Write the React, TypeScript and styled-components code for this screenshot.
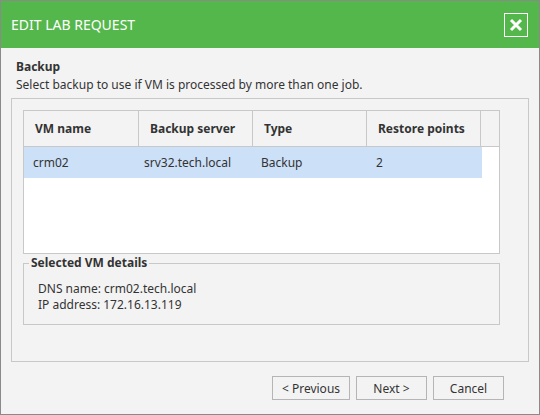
import styled, { createGlobalStyle } from 'styled-components';

const Global = createGlobalStyle`
  html, body { margin: 0; padding: 0; }
  body { font-family: "Noto Sans", "Open Sans", sans-serif; font-size: 12px; color: #333; }
`;

const Dialog = styled.div`
  width: 540px;
  height: 415px;
  box-sizing: border-box;
  border: 1px solid #8a8a8a;
  background: #f3f3f3;
  display: flex;
  flex-direction: column;
`;

const TitleBar = styled.div`
  height: 47px;
  background: #54b74b;
  display: flex;
  align-items: center;
  justify-content: space-between;
  padding: 0 10px 0 10px;
  color: #fff;
  font-size: 14px;
`;

const CloseBox = styled.button`
  width: 24px;
  height: 24px;
  border: 1px solid #fff;
  background: transparent;
  padding: 0;
  display: flex;
  align-items: center;
  justify-content: center;
  margin-right: 1px;
`;

const Body = styled.div`
  flex: 1;
  padding: 10px 10px 0 10px;
  display: flex;
  flex-direction: column;
`;

const Heading = styled.div`
  font-weight: bold;
  padding-left: 5px;
  line-height: 18px;
`;

const Sub = styled.div`
  padding-left: 5px;
  line-height: 18px;
  margin-bottom: 4px;
`;

const Panel = styled.div`
  height: 264px;
  box-sizing: border-box;
  border: 1px solid #c8c8c8;
  padding: 11px 28px 0 11px;
`;

const Table = styled.div`
  height: 144px;
  box-sizing: border-box;
  border: 1px solid #c8c8c8;
  background: #fff;
`;

const Row = styled.div<{ $head?: boolean; $selected?: boolean }>`
  display: grid;
  grid-template-columns: 115px 114px 114px 114px 1fr;
  height: ${p => (p.$head ? 35 : 31)}px;
  background: ${p => (p.$head ? '#f3f3f3' : p.$selected ? '#cce0f8' : '#fff')};
  border-bottom: ${p => (p.$head ? '1px solid #c8c8c8' : 'none')};
  font-weight: ${p => (p.$head ? 'bold' : 'normal')};
  margin-right: ${p => (p.$selected ? '17px' : '0')};
`;

const Cell = styled.div<{ $head?: boolean; $pad?: number }>`
  display: flex;
  align-items: center;
  padding-left: ${p => (p.$head ? 11 : p.$pad ?? 9)}px;
  border-right: ${p => (p.$head ? '1px solid #c8c8c8' : 'none')};
  white-space: nowrap;
`;

const Fieldset = styled.fieldset`
  margin: 1px 0 0 0;
  padding: 10px 0 0 14px;
  height: 70px;
  box-sizing: border-box;
  border: 1px solid #c8c8c8;
  line-height: 16px;
  legend {
    font-weight: bold;
    padding: 0 2px;
    margin-left: -9px;
  }
`;

const Footer = styled.div`
  flex: 1;
  display: flex;
  justify-content: flex-end;
  align-items: center;
  gap: 6px;
  padding-right: 25px;
`;

const Btn = styled.button<{ $w: number }>`
  width: ${p => p.$w}px;
  height: 24px;
  border: 1px solid #b5b5b5;
  background: #f3f3f3;
  font-family: inherit;
  font-size: 12px;
  color: #333;
`;

export default function App() {
  return (
    <Dialog>
      <Global />
      <TitleBar>
        EDIT LAB REQUEST
        <CloseBox>
          <svg width="14" height="14" viewBox="0 0 14 14">
            <path d="M2 2 L12 12 M12 2 L2 12" stroke="#fff" strokeWidth="3" />
          </svg>
        </CloseBox>
      </TitleBar>
      <Body>
        <Heading>Backup</Heading>
        <Sub>Select backup to use if VM is processed by more than one job.</Sub>
        <Panel>
          <Table>
            <Row $head>
              <Cell $head>VM name</Cell>
              <Cell $head>Backup server</Cell>
              <Cell $head>Type</Cell>
              <Cell $head>Restore points</Cell>
              <Cell />
            </Row>
            <Row $selected>
              <Cell>crm02</Cell>
              <Cell $pad={5}>srv32.tech.local</Cell>
              <Cell $pad={8}>Backup</Cell>
              <Cell>2</Cell>
              <Cell />
            </Row>
          </Table>
          <Fieldset>
            <legend>Selected VM details</legend>
            <div>DNS name: crm02.tech.local</div>
            <div>IP address: 172.16.13.119</div>
          </Fieldset>
        </Panel>
        <Footer>
          <Btn $w={78}>&lt; Previous</Btn>
          <Btn $w={71}>Next &gt;</Btn>
          <Btn $w={71}>Cancel</Btn>
        </Footer>
      </Body>
    </Dialog>
  );
}
